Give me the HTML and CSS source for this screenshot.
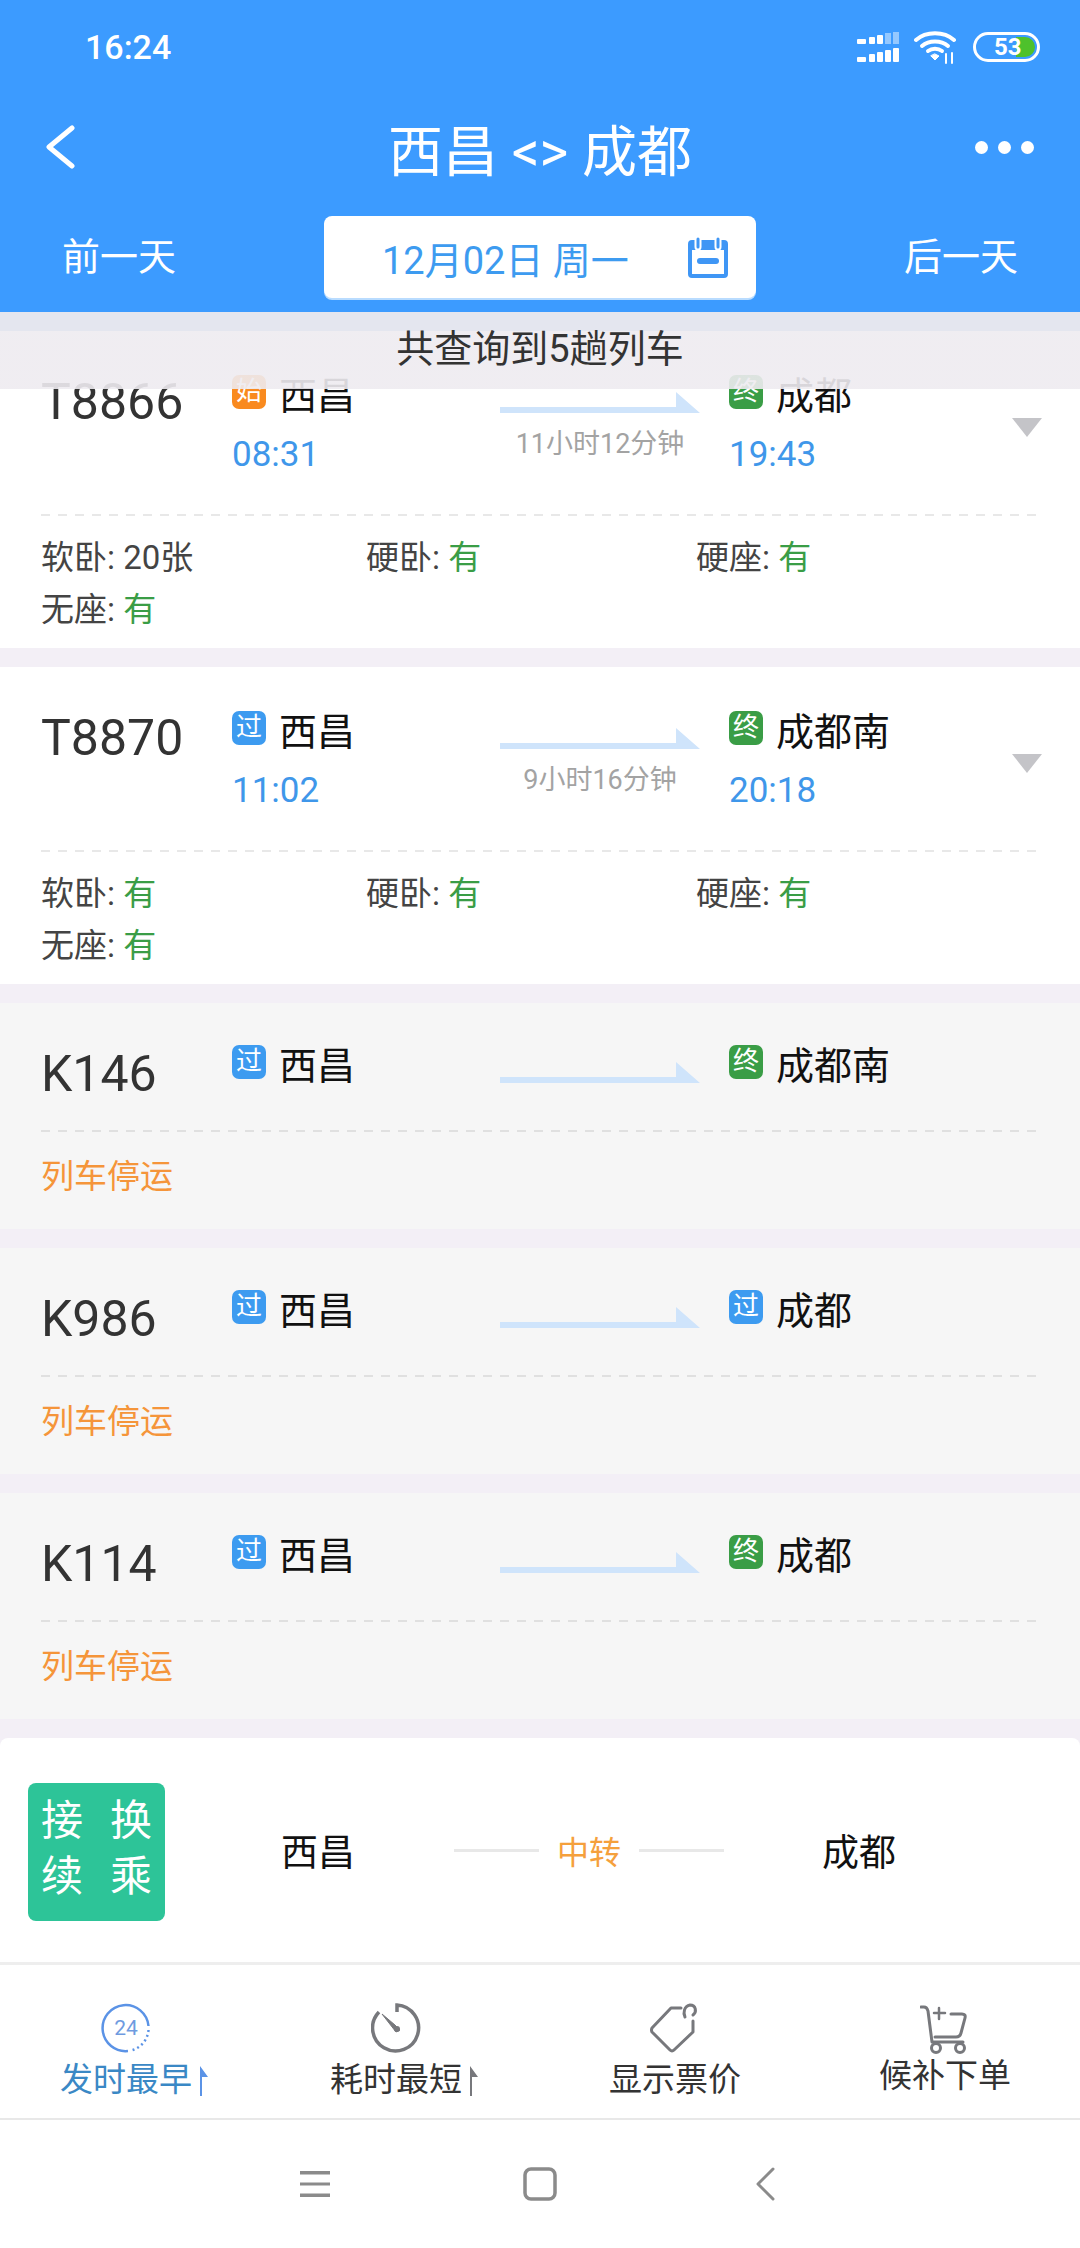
FILE: index.html
```html
<!DOCTYPE html>
<html lang="zh-CN">
<head>
    <meta charset="UTF-8">
    <meta name="viewport" content="width=device-width, initial-scale=1.0">
    <title>西昌 &lt;&gt; 成都</title>
    <link rel="stylesheet" href="styles.css">
</head>
<body>
    <header class="top-bar">
        <div class="status-bar">
            <span class="clock">16:24</span>
            <div class="status-icons">
                <svg class="signal" width="42" height="31" viewBox="0 0 42 31" fill="#fff">
                    <rect x="0" y="7" width="9" height="5" rx="1"/>
                    <rect x="12" y="5" width="6" height="7" rx="1"/>
                    <rect x="20" y="3" width="6" height="9" rx="1"/>
                    <rect x="28" y="1" width="6" height="11" opacity=".45"/>
                    <rect x="36" y="0" width="6" height="12" opacity=".45"/>
                    <rect x="0" y="25" width="9" height="5" rx="1"/>
                    <rect x="12" y="22" width="6" height="8" rx="1"/>
                    <rect x="20" y="20" width="6" height="10" rx="1"/>
                    <rect x="28" y="18" width="6" height="12" rx="1"/>
                    <rect x="36" y="16" width="6" height="14" rx="1"/>
                </svg>
                <svg class="wifi" width="44" height="34" viewBox="0 0 44 34" fill="none" stroke="#fff" stroke-width="4" stroke-linecap="round">
                    <path d="M2 10C12 1 30 1 40 10"/>
                    <path d="M8 16C15 10 27 10 34 16"/>
                    <path d="M14 21C18 18 24 18 28 21"/>
                    <path d="M17 26L21 30L25 26L21 24Z" fill="#fff" stroke-width="1"/>
                    <path d="M32 24V33M38 23V33" stroke-width="2"/>
                </svg>
                <div class="battery">
                    <span class="battery-level"></span>
                    <span class="battery-num">53</span>
                </div>
            </div>
        </div>

        <div class="title-row">
            <svg class="back" width="30" height="44" viewBox="0 0 30 44" fill="none" stroke="#fff" stroke-width="5" stroke-linecap="round" stroke-linejoin="round">
                <path d="M27 3L4 22L27 41"/>
            </svg>
            <h1>西昌 &lt;&gt; 成都</h1>
            <div class="dots"><i></i><i></i><i></i></div>
        </div>

        <div class="date-row">
            <span class="day-link day-prev">前一天</span>
            <div class="date-box">
                <span>12月02日 周一</span>
                <svg width="40" height="41" viewBox="0 0 40 41">
                    <path d="M4 3H36Q40 3 40 7V37Q40 41 36 41H4Q0 41 0 37V7Q0 3 4 3ZM4 13V37H36V13Z" fill="#3f96f5" fill-rule="evenodd"/>
                    <path d="M10 2V10M30 2V10" stroke="#fff" stroke-width="7" stroke-linecap="round"/>
                    <path d="M10 2V10M30 2V10" stroke="#3f96f5" stroke-width="3" stroke-linecap="round"/>
                    <path d="M12 24H28" stroke="#3f96f5" stroke-width="6" stroke-linecap="round"/>
                </svg>
            </div>
            <span class="day-link day-next">后一天</span>
        </div>
    </header>

    <main class="train-list">
        <div class="notice">共查询到5趟列车</div>

        <section class="train-card">
            <div class="train-top">
                <div class="train-no">T8866</div>
                <div class="stop stop-from">
                    <div class="stop-name"><span class="tag tag-start">始</span>西昌</div>
                    <div class="stop-time">08:31</div>
                </div>
                <div class="trip">
                    <svg class="arrow" width="200" height="21" viewBox="0 0 200 21"><polygon points="0,15 176,15 176,0 200,21 0,21"/></svg>
                    <div class="duration">11小时12分钟</div>
                </div>
                <div class="stop">
                    <div class="stop-name"><span class="tag tag-end">终</span>成都</div>
                    <div class="stop-time">19:43</div>
                </div>
                <span class="caret"></span>
            </div>
            <div class="seats">
                <span>软卧: 20张</span>
                <span>硬卧: <b>有</b></span>
                <span>硬座: <b>有</b></span>
                <span>无座: <b>有</b></span>
            </div>
        </section>

        <section class="train-card">
            <div class="train-top">
                <div class="train-no">T8870</div>
                <div class="stop stop-from">
                    <div class="stop-name"><span class="tag tag-pass">过</span>西昌</div>
                    <div class="stop-time">11:02</div>
                </div>
                <div class="trip">
                    <svg class="arrow" width="200" height="21" viewBox="0 0 200 21"><polygon points="0,15 176,15 176,0 200,21 0,21"/></svg>
                    <div class="duration">9小时16分钟</div>
                </div>
                <div class="stop">
                    <div class="stop-name"><span class="tag tag-end">终</span>成都南</div>
                    <div class="stop-time">20:18</div>
                </div>
                <span class="caret"></span>
            </div>
            <div class="seats">
                <span>软卧: <b>有</b></span>
                <span>硬卧: <b>有</b></span>
                <span>硬座: <b>有</b></span>
                <span>无座: <b>有</b></span>
            </div>
        </section>

        <section class="train-card stopped">
            <div class="train-top">
                <div class="train-no">K146</div>
                <div class="stop stop-from">
                    <div class="stop-name"><span class="tag tag-pass">过</span>西昌</div>
                </div>
                <div class="trip">
                    <svg class="arrow" width="200" height="21" viewBox="0 0 200 21"><polygon points="0,15 176,15 176,0 200,21 0,21"/></svg>
                </div>
                <div class="stop">
                    <div class="stop-name"><span class="tag tag-end">终</span>成都南</div>
                </div>
            </div>
            <div class="stop-note">列车停运</div>
        </section>

        <section class="train-card stopped">
            <div class="train-top">
                <div class="train-no">K986</div>
                <div class="stop stop-from">
                    <div class="stop-name"><span class="tag tag-pass">过</span>西昌</div>
                </div>
                <div class="trip">
                    <svg class="arrow" width="200" height="21" viewBox="0 0 200 21"><polygon points="0,15 176,15 176,0 200,21 0,21"/></svg>
                </div>
                <div class="stop">
                    <div class="stop-name"><span class="tag tag-pass">过</span>成都</div>
                </div>
            </div>
            <div class="stop-note">列车停运</div>
        </section>

        <section class="train-card stopped">
            <div class="train-top">
                <div class="train-no">K114</div>
                <div class="stop stop-from">
                    <div class="stop-name"><span class="tag tag-pass">过</span>西昌</div>
                </div>
                <div class="trip">
                    <svg class="arrow" width="200" height="21" viewBox="0 0 200 21"><polygon points="0,15 176,15 176,0 200,21 0,21"/></svg>
                </div>
                <div class="stop">
                    <div class="stop-name"><span class="tag tag-end">终</span>成都</div>
                </div>
            </div>
            <div class="stop-note">列车停运</div>
        </section>

        <section class="transfer-card">
            <div class="transfer-badge">
                <span>接</span><span>换</span><span>续</span><span>乘</span>
            </div>
            <span class="transfer-city city-from">西昌</span>
            <span class="transfer-line"></span>
            <span class="transfer-mid">中转</span>
            <span class="transfer-line"></span>
            <span class="transfer-city city-to">成都</span>
        </section>
    </main>

    <nav class="sort-bar">
        <div class="sort-item active has-arrow">
            <svg width="50" height="50" viewBox="0 0 50 50" fill="none" stroke="#5b93e6" stroke-width="2.5">
                <path d="M47.5 23A23 23 0 1 0 27 48"/>
                <path d="M47.5 27A23 23 0 0 1 30 47.5" stroke-dasharray="2 3"/>
                <text x="25" y="32" text-anchor="middle" class="icon-num">24</text>
            </svg>
            <div class="sort-label">发时最早<svg class="sort-arrow" width="8" height="30" viewBox="0 0 8 30"><path d="M0 0L8 11H2V30H0Z"/></svg></div>
        </div>
        <div class="sort-item has-arrow">
            <svg width="50" height="50" viewBox="0 0 50 50" fill="none" stroke="#77787c" stroke-width="3.5">
                <path d="M26 9V2A23 23 0 1 1 8 9"/>
                <path d="M11 11L24 22L29 27L25 29Z" fill="#77787c" stroke-width="1"/>
                <circle cx="26" cy="26" r="3" fill="#77787c" stroke="none"/>
            </svg>
            <div class="sort-label">耗时最短<svg class="sort-arrow" width="8" height="30" viewBox="0 0 8 30"><path d="M0 0L8 11H2V30H0Z"/></svg></div>
        </div>
        <div class="sort-item">
            <svg width="50" height="50" viewBox="0 0 50 50" fill="none" stroke="#77787c" stroke-width="3" stroke-linecap="round" stroke-linejoin="round">
                <path d="M31 5H21L2 25Q1 27 2 29L20 47Q22 49 24 47L43 29V18"/>
                <path d="M35 14C33 10 34 3 40 2C46 2 47 9 43 12"/>
            </svg>
            <div class="sort-label">显示票价</div>
        </div>
        <div class="sort-item sort-raised">
            <svg width="50" height="50" viewBox="0 0 50 50" fill="none" stroke="#77787c" stroke-width="3" stroke-linecap="round" stroke-linejoin="round">
                <path d="M1 2H4Q7 2 8 6L12 37H43"/>
                <path d="M31 9H42Q46 9 45 13L41 28Q40 32 36 32H15"/>
                <path d="M19 3V14M14 8H25" stroke-width="2.5"/>
                <circle cx="16" cy="43" r="4.5"/>
                <circle cx="40" cy="43" r="4.5"/>
            </svg>
            <div class="sort-label">候补下单</div>
        </div>
    </nav>

    <footer class="nav-bar">
        <div class="nav-item">
            <svg width="32" height="28" viewBox="0 0 32 28" fill="#8b8b8b">
                <rect x="1" y="1" width="30" height="3.5"/>
                <rect x="1" y="12.5" width="30" height="3"/>
                <rect x="1" y="23.5" width="30" height="3.5"/>
            </svg>
        </div>
        <div class="nav-item">
            <svg width="34" height="34" viewBox="0 0 34 34" fill="none" stroke="#8b8b8b" stroke-width="3.5">
                <rect x="2" y="2" width="30" height="30" rx="6"/>
            </svg>
        </div>
        <div class="nav-item">
            <svg width="20" height="34" viewBox="0 0 20 34" fill="none" stroke="#8b8b8b" stroke-width="3" stroke-linecap="round" stroke-linejoin="round">
                <path d="M18 2L3 17L18 32"/>
            </svg>
        </div>
    </footer>
</body>
</html>
```

FILE: styles.css
```css
* {
    margin: 0;
    padding: 0;
    box-sizing: border-box;
    font-family: Roboto, 'Noto Sans CJK SC', sans-serif;
}

body {
    width: 1080px;
    height: 2248px;
    background-color: white;
    display: flex;
    flex-direction: column;
    overflow: hidden;
}

/* header */
.top-bar {
    height: 312px;
    flex: none;
    background-color: #3c9bff;
    color: white;
}

.status-bar {
    height: 94px;
    display: flex;
    justify-content: space-between;
    align-items: center;
    padding: 0 40px 0 85px;
}

.clock {
    font-size: 34px;
    font-weight: 500;
}

.status-icons {
    display: flex;
    align-items: center;
    gap: 15px;
}

.battery {
    position: relative;
    width: 67px;
    height: 30px;
    border: 3px solid white;
    border-radius: 15px;
    font-size: 24px;
    font-weight: 700;
    line-height: 24px;
    padding-left: 18px;
}

.battery-level {
    position: absolute;
    top: 2px;
    right: 2px;
    width: 19px;
    height: 20px;
    background-color: #4ec12c;
    border-radius: 0 10px 10px 0;
}

.battery-num {
    position: relative;
}

.title-row {
    height: 106px;
    display: grid;
    grid-template-columns: 60px 1fr 60px;
    align-items: center;
    padding: 0 45px;
}

.title-row h1 {
    font-size: 55px;
    font-weight: 400;
    text-align: center;
}

.dots {
    display: flex;
    gap: 10px;
}

.dots i {
    width: 13px;
    height: 13px;
    background-color: white;
    border-radius: 50%;
}

.date-row {
    display: flex;
    align-items: center;
    padding-top: 16px;
}

.day-link {
    width: 324px;
    font-size: 38px;
    line-height: 82px;
}

.day-prev {
    padding-left: 62px;
}

.day-next {
    padding-right: 62px;
    text-align: right;
}

.date-box {
    width: 432px;
    height: 82px;
    flex: none;
    display: flex;
    justify-content: space-between;
    align-items: center;
    padding: 0 28px 0 58px;
    background-color: white;
    border-radius: 8px;
    box-shadow: 0 2px 0 #b9dcff;
    color: #3d9bf0;
    font-size: 38px;
}

/* list */
.train-list {
    position: relative;
    flex: 1;
    overflow: hidden;
    background-color: #f3eff6;
    padding-top: 19px;
}

.notice {
    position: absolute;
    top: 0;
    left: 0;
    right: 0;
    height: 77px;
    line-height: 74px;
    text-align: center;
    font-size: 38px;
    color: #333;
    background: linear-gradient(#e4e6ef 19px, rgba(238, 235, 240, 0.9) 19px);
    z-index: 2;
}

.train-card {
    background-color: white;
    padding-top: 42px;
    margin-bottom: 19px;
}

.train-top {
    height: 143px;
    display: flex;
    margin: 0 38px 0 41px;
    background-image: repeating-linear-gradient(to right, #e8e8e8 0 9px, transparent 9px 17px);
    background-size: 100% 2px;
    background-repeat: no-repeat;
    background-position: bottom;
}

.train-no {
    width: 191px;
    font-size: 50px;
    line-height: 58px;
    color: #333;
    flex: none;
}

.stop {
    margin-top: -4px;
}

.stop-from {
    width: 268px;
    flex: none;
}

.stop-name {
    display: flex;
    align-items: center;
    height: 46px;
    font-size: 38px;
    color: #111;
}

.tag {
    width: 34px;
    height: 34px;
    border-radius: 7px;
    margin-right: 13px;
    color: white;
    font-size: 26px;
    line-height: 33px;
    text-align: center;
    flex: none;
}

.tag-start {
    background-color: #f98a1f;
}

.tag-pass {
    background-color: #3d9bf0;
}

.tag-end {
    background-color: #3a9d46;
}

.stop-time {
    margin-top: 13px;
    font-size: 35px;
    line-height: 54px;
    color: #3f97ea;
}

.trip {
    width: 229px;
    flex: none;
    padding-top: 19px;
}

.arrow {
    display: block;
    fill: #cfe4fb;
}

.duration {
    width: 200px;
    margin-top: 13px;
    text-align: center;
    font-size: 27px;
    line-height: 36px;
    color: #a3a3a3;
}

.caret {
    margin-left: auto;
    margin-top: 45px;
    width: 0;
    height: 0;
    border-left: 15px solid transparent;
    border-right: 15px solid transparent;
    border-top: 19px solid #c4c4c8;
}

.seats {
    display: grid;
    grid-template-columns: 325px 330px 1fr;
    padding: 16px 41px 12px;
    font-size: 33px;
    line-height: 52px;
    color: #444;
}

.seats b {
    font-weight: 400;
    color: #3a9d46;
}

.stopped {
    background-color: #f6f6f6;
    padding-top: 40px;
}

.stopped .train-top {
    height: 89px;
    background-image: repeating-linear-gradient(to right, #e0e0e0 0 9px, transparent 9px 17px);
}

.stopped .train-no {
    padding-top: 2px;
}

.stop-note {
    padding: 0 41px;
    font-size: 33px;
    line-height: 90px;
    height: 97px;
    color: #f5953a;
}

.transfer-card {
    height: 224px;
    background-color: white;
    border-radius: 8px 8px 0 0;
    display: flex;
    align-items: center;
    padding-left: 28px;
}

.transfer-badge {
    width: 137px;
    height: 138px;
    margin-top: 4px;
    flex: none;
    display: grid;
    grid-template-columns: 69px 42px;
    align-content: center;
    padding: 0 0 6px 13px;
    background-color: #2dc498;
    border-radius: 8px;
    color: white;
    font-size: 42px;
    line-height: 56px;
}

.transfer-city {
    font-size: 37px;
    color: #111;
}

.city-from {
    margin-left: 116px;
    margin-right: 99px;
}

.city-to {
    margin-left: 98px;
}

.transfer-line {
    width: 85px;
    height: 3px;
    background-color: #e8e8e8;
}

.transfer-mid {
    font-size: 32px;
    color: #f5a03c;
    margin: 0 18px 0 18px;
}

/* sort tabs */
.sort-bar {
    height: 158px;
    flex: none;
    display: grid;
    grid-template-columns: repeat(4, 1fr);
    border-top: 3px solid #eeeeee;
    border-bottom: 2px solid #e8e8e8;
    padding-top: 38px;
}

.sort-item {
    display: flex;
    flex-direction: column;
    align-items: center;
    color: #333;
}

.sort-item svg {
    display: block;
    flex: none;
}

.has-arrow {
    padding-right: 18px;
}

.sort-label {
    position: relative;
    margin-top: 5px;
    font-size: 33px;
    line-height: 44px;
    white-space: nowrap;
}

.sort-raised .sort-label {
    margin-top: -1px;
}

.sort-raised svg {
    margin-top: 2px;
}

.sort-item svg.sort-arrow {
    position: absolute;
    top: 8px;
    right: -16px;
    fill: #77787c;
}

.active {
    color: #3a88c5;
}

.active svg.sort-arrow {
    fill: #5b93e6;
}

.icon-num {
    font-size: 21px;
    fill: #6f9be0;
    stroke: none;
}

/* system nav */
.nav-bar {
    flex: none;
    height: 128px;
    display: flex;
    justify-content: center;
    align-items: center;
    background-color: white;
}

.nav-item {
    width: 225px;
    display: flex;
    justify-content: center;
}
```
